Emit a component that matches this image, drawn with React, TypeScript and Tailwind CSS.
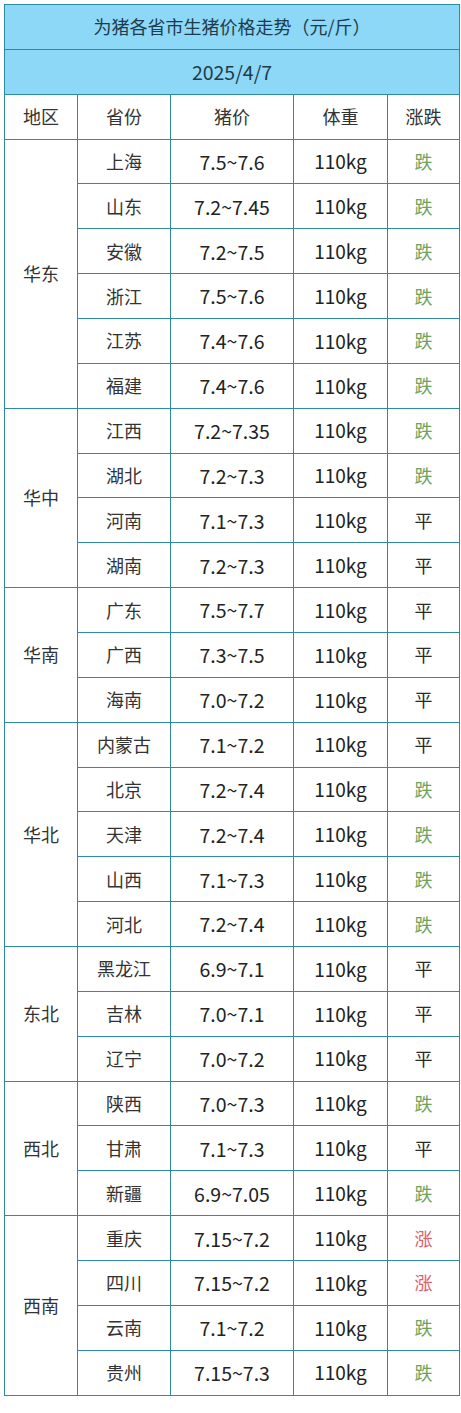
type Row = { prov: string; price: string; trend: string };

const regions: { name: string; rows: Row[] }[] = [
  {
    name: "华东",
    rows: [
      { prov: "上海", price: "7.5~7.6", trend: "跌" },
      { prov: "山东", price: "7.2~7.45", trend: "跌" },
      { prov: "安徽", price: "7.2~7.5", trend: "跌" },
      { prov: "浙江", price: "7.5~7.6", trend: "跌" },
      { prov: "江苏", price: "7.4~7.6", trend: "跌" },
      { prov: "福建", price: "7.4~7.6", trend: "跌" },
    ],
  },
  {
    name: "华中",
    rows: [
      { prov: "江西", price: "7.2~7.35", trend: "跌" },
      { prov: "湖北", price: "7.2~7.3", trend: "跌" },
      { prov: "河南", price: "7.1~7.3", trend: "平" },
      { prov: "湖南", price: "7.2~7.3", trend: "平" },
    ],
  },
  {
    name: "华南",
    rows: [
      { prov: "广东", price: "7.5~7.7", trend: "平" },
      { prov: "广西", price: "7.3~7.5", trend: "平" },
      { prov: "海南", price: "7.0~7.2", trend: "平" },
    ],
  },
  {
    name: "华北",
    rows: [
      { prov: "内蒙古", price: "7.1~7.2", trend: "平" },
      { prov: "北京", price: "7.2~7.4", trend: "跌" },
      { prov: "天津", price: "7.2~7.4", trend: "跌" },
      { prov: "山西", price: "7.1~7.3", trend: "跌" },
      { prov: "河北", price: "7.2~7.4", trend: "跌" },
    ],
  },
  {
    name: "东北",
    rows: [
      { prov: "黑龙江", price: "6.9~7.1", trend: "平" },
      { prov: "吉林", price: "7.0~7.1", trend: "平" },
      { prov: "辽宁", price: "7.0~7.2", trend: "平" },
    ],
  },
  {
    name: "西北",
    rows: [
      { prov: "陕西", price: "7.0~7.3", trend: "跌" },
      { prov: "甘肃", price: "7.1~7.3", trend: "平" },
      { prov: "新疆", price: "6.9~7.05", trend: "跌" },
    ],
  },
  {
    name: "西南",
    rows: [
      { prov: "重庆", price: "7.15~7.2", trend: "涨" },
      { prov: "四川", price: "7.15~7.2", trend: "涨" },
      { prov: "云南", price: "7.1~7.2", trend: "跌" },
      { prov: "贵州", price: "7.15~7.3", trend: "跌" },
    ],
  },
];

const cell = "border border-[#2e8aa3] p-0 text-center align-middle";

function trendColor(t: string) {
  if (t === "跌") return "text-[#6ea35e]";
  if (t === "涨") return "text-[#dd5f6c]";
  return "text-[#2a2a2a]";
}

export default function App() {
  return (
    <div className="bg-white pl-[4px] pt-[4px] pb-[18px] font-['Noto_Sans_CJK_SC','Noto_Sans',sans-serif] text-[18px] text-[#222]">
      <table className="w-[455px] table-fixed border-collapse">
        <colgroup>
          <col className="w-[73px]" />
          <col className="w-[93px]" />
          <col className="w-[123px]" />
          <col className="w-[94px]" />
          <col className="w-[72px]" />
        </colgroup>
        <tbody>
          <tr className="h-[44.87px] bg-[#8dd7f7] text-[#1d3c4c]">
            <td colSpan={5} className={cell}>
              为猪各省市生猪价格走势（元/斤）
            </td>
          </tr>
          <tr className="h-[44.87px] bg-[#8dd7f7] text-[#1d3c4c]">
            <td colSpan={5} className={`${cell} text-[19.5px]`}>
              2025/4/7
            </td>
          </tr>
          <tr className="h-[44.87px] text-[#333]">
            <td className={cell}>地区</td>
            <td className={cell}>省份</td>
            <td className={cell}>猪价</td>
            <td className={cell}>体重</td>
            <td className={cell}>涨跌</td>
          </tr>
          {regions.map((reg) =>
            reg.rows.map((r, i) => (
              <tr key={r.prov} className="h-[44.87px]">
                {i === 0 && (
                  <td rowSpan={reg.rows.length} className={`${cell} text-[#333]`}>
                    {reg.name}
                  </td>
                )}
                <td className={`${cell} text-[#333]`}>{r.prov}</td>
                <td className={`${cell} text-[19.5px]`}>{r.price}</td>
                <td className={`${cell} text-[19px]`}>110kg</td>
                <td className={`${cell} ${trendColor(r.trend)}`}>{r.trend}</td>
              </tr>
            ))
          )}
        </tbody>
      </table>
    </div>
  );
}
